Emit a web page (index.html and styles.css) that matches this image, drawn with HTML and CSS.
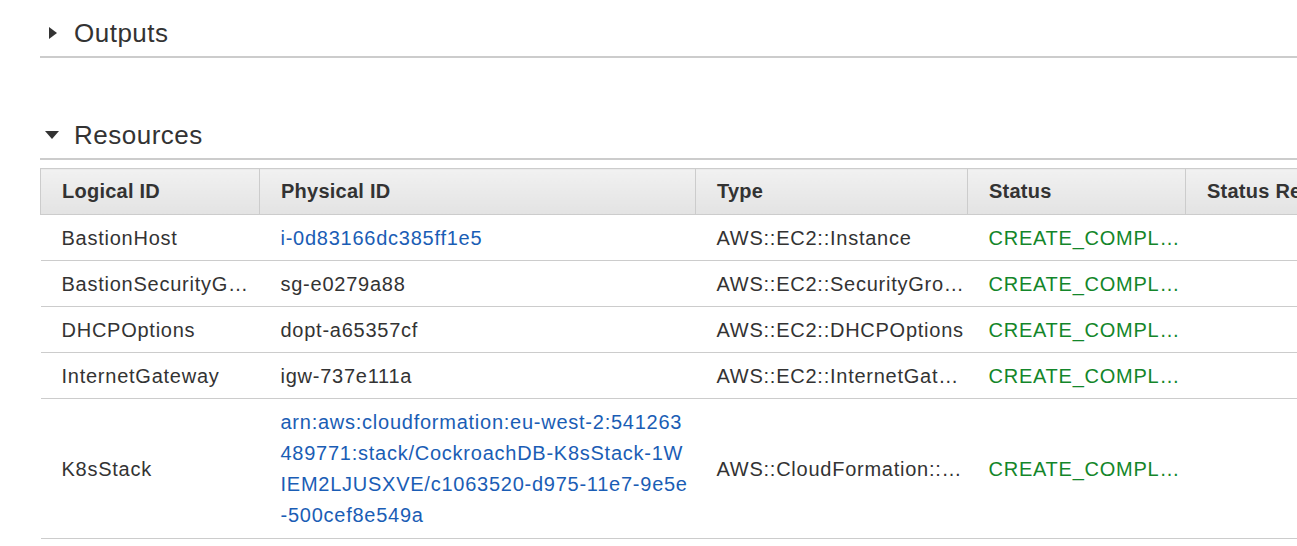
FILE: index.html
```html
<!DOCTYPE html>
<html>
<head>
<meta charset="utf-8">
<link rel="stylesheet" href="styles.css">
</head>
<body>
<div class="page">
  <section class="section">
    <div class="section-header">
      <span class="caret caret-right"></span>
      <h2 class="section-title">Outputs</h2>
    </div>
  </section>
  <section class="section section-resources">
    <div class="section-header">
      <span class="caret caret-down"></span>
      <h2 class="section-title">Resources</h2>
    </div>
    <table class="res-table">
      <colgroup>
        <col class="c1"><col class="c2"><col class="c3"><col class="c4"><col class="c5">
      </colgroup>
      <thead>
        <tr><th>Logical ID</th><th>Physical ID</th><th>Type</th><th>Status</th><th class="last">Status Re</th></tr>
      </thead>
      <tbody>
        <tr><td>BastionHost</td><td><a class="link">i-0d83166dc385ff1e5</a></td><td>AWS::EC2::Instance</td><td class="ok">CREATE_COMPL…</td><td></td></tr>
        <tr><td>BastionSecurityG…</td><td>sg-e0279a88</td><td>AWS::EC2::SecurityGro…</td><td class="ok">CREATE_COMPL…</td><td></td></tr>
        <tr><td>DHCPOptions</td><td>dopt-a65357cf</td><td>AWS::EC2::DHCPOptions</td><td class="ok">CREATE_COMPL…</td><td></td></tr>
        <tr><td>InternetGateway</td><td>igw-737e111a</td><td>AWS::EC2::InternetGat…</td><td class="ok">CREATE_COMPL…</td><td></td></tr>
        <tr><td>K8sStack</td><td class="wrap"><a class="link">arn:aws:cloudformation:eu-west-2:541263<br>489771:stack/CockroachDB-K8sStack-1W<br>IEM2LJUSXVE/c1063520-d975-11e7-9e5e<br>-500cef8e549a</a></td><td>AWS::CloudFormation::…</td><td class="ok">CREATE_COMPL…</td><td></td></tr>
      </tbody>
    </table>
  </section>
</div>
</body>
</html>
```
FILE: styles.css
```css
html, body {
  margin: 0;
  padding: 0;
  background: #fff;
  overflow: hidden;
}
body {
  font-family: "Liberation Sans", Arial, Helvetica, sans-serif;
  color: #333;
}
.page {
  width: 1257px;
  padding: 10px 0 0 40px;
}
.section-header {
  height: 46px;
  display: flex;
  align-items: center;
  border-bottom: 2px solid #cccccc;
}
.section-resources {
  margin-top: 54px;
}
.section-title {
  margin: 0;
  font-size: 26px;
  font-weight: normal;
  letter-spacing: 0.5px;
  color: #333;
}
.caret {
  display: inline-block;
  width: 0;
  height: 0;
}
.caret-right {
  margin-left: 9px;
  margin-right: 17px;
  border-top: 6px solid transparent;
  border-bottom: 6px solid transparent;
  border-left: 8px solid #333;
}
.caret-down {
  margin-left: 5px;
  margin-right: 15px;
  border-left: 7.5px solid transparent;
  border-right: 7.5px solid transparent;
  border-top: 8px solid #333;
}
.res-table {
  margin-top: 8px;
  border-collapse: collapse;
  table-layout: fixed;
  width: 1257px;
  font-size: 20px;
  letter-spacing: 0.75px;
}
.c1 { width: 219px; }
.c2 { width: 436px; }
.c3 { width: 272px; }
.c4 { width: 218px; }
.c5 { width: 112px; }
.res-table th {
  height: 45px;
  padding: 0 4px 0 21px;
  text-align: left;
  font-weight: bold;
  letter-spacing: 0.25px;
  background: linear-gradient(#f1f1f1, #e3e3e3);
  border: 1px solid #cccccc;
  white-space: nowrap;
}
.res-table th.last {
  border-right: none;
}
.res-table td {
  padding: 8px 2px 7px 21px;
  line-height: 30px;
  border-bottom: 1px solid #cccccc;
  white-space: nowrap;
  vertical-align: middle;
}
.res-table td.wrap {
  line-height: 31px;
}
.link {
  color: #1a5db5;
  text-decoration: none;
}
.ok {
  color: #13862a;
}
```
